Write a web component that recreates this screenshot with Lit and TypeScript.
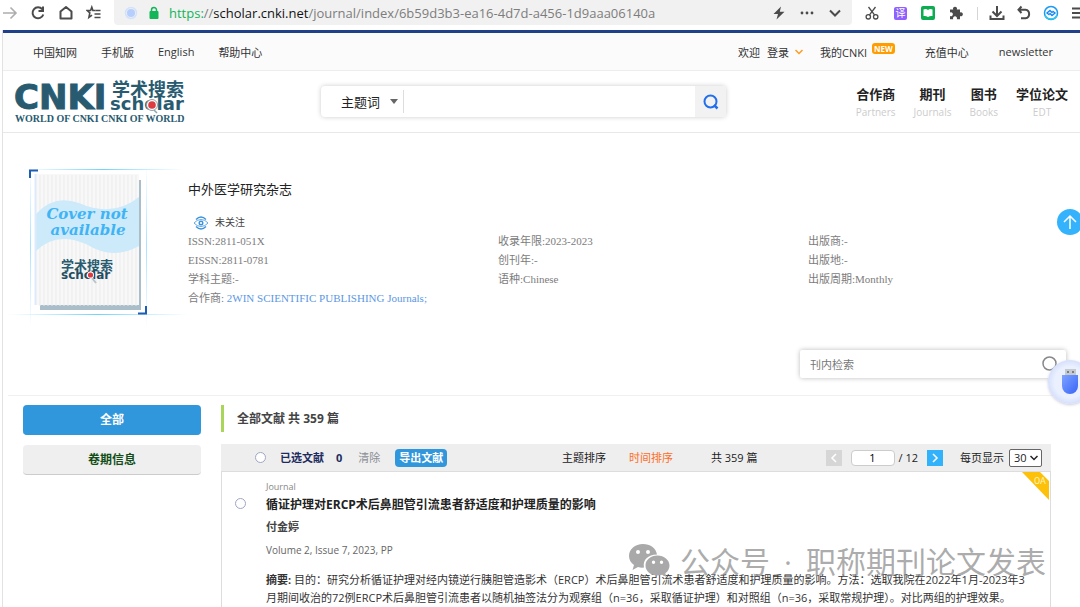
import { LitElement, html, css, svg } from "lit";
import { customElement, property } from "lit/decorators.js";

const sans = css`"Open Sans", "Noto Sans CJK SC", sans-serif`;
const serif = css`"Liberation Serif", "Noto Sans CJK SC", serif`;

@customElement("browser-bar")
class BrowserBar extends LitElement {
  static styles = css`
    :host { display: flex; align-items: flex-start; height: 30px; background: #fff; color: #4b4b4b; font-family: ${sans}; }
    .group { display: flex; align-items: center; height: 26px; flex: none; }
    .left { gap: 12px; padding: 0 12px 0 2px; }
    .right { width: 216px; padding-left: 12px; overflow: hidden; }
    .tools { display: flex; gap: 12px; flex: none; }
    .menu { display: flex; gap: 11px; flex: none; }
    .divider { width: 1px; height: 13px; background: #d5d5d5; margin: 0 11px 0 13px; flex: none; }
    button { all: unset; display: block; width: 16px; height: 16px; flex: none; cursor: pointer; }
    svg { display: block; width: 16px; height: 16px; fill: none; stroke: currentColor; stroke-width: 2; }
    svg.thin { stroke-width: 1.3; }
    svg.medium { stroke-width: 1.6; }
    svg.flat { stroke: none; }
    .pale { color: #adadad; }
    svg.solid { fill: currentColor; stroke: none; }
    .field { flex: 1; min-width: 0; height: 25px; display: flex; align-items: center; background: #f1f1f1; border-radius: 0 0 4px 4px; padding: 0 9px; }
    .field .dot { margin-right: 7px; }
    .url { flex: 1; min-width: 0; white-space: nowrap; overflow: hidden; font-size: 13px; line-height: 20px; color: #7d7d7d; margin-left: 7px; }
    .secure { color: #12b558; }
    .host { color: #111; }
    .end { display: flex; gap: 12px; }
    .tile { background: #8f5fff; border-radius: 2px; color: #fff; font-size: 10px; line-height: 13px; width: 13px; height: 13px; margin: 1px 2px; text-align: center; }
  `;
  render() {
    return html`
      <div class="group left">
        <button class="pale" aria-label="Forward"><svg class="medium" viewBox="0 0 16 16"><path d="M1 8H14M8.500 2.500L14 8L8.500 13.500" /></svg></button>
        <button aria-label="Reload"><svg viewBox="0 0 16 16"><path d="M12.300 4.300A5.500 5.500 0 1 0 13.300 9.500" /><path d="M13 1.500V6H8.500" /></svg></button>
        <button aria-label="Home"><svg viewBox="0 0 16 16"><path d="M2.500 6.500L8 2L13.500 6.500V13.500H2.500Z" stroke-linejoin="round" /></svg></button>
        <button aria-label="Favourites"><svg class="medium" viewBox="0 0 16 16"><path d="M9.500 5.500H6.900L5.800 2.200L4.600 5.500H1.200L3.800 7.800L2.900 12.500L6 10.200" /><path d="M9.500 5.500H14.500M8.500 9H14.500M8.500 12.500H14.500" /></svg></button>
      </div>
      <div class="field">
        <svg class="dot" viewBox="0 0 16 16"><circle cx="8" cy="8" r="4" fill="#b5cefb" stroke="none" /><circle cx="8" cy="8" r="5.500" stroke="#d3e1fa" stroke-width="1.500" /></svg>
        <svg class="lock" viewBox="0 0 16 16"><rect x="3.500" y="6" width="9" height="8" rx="1" fill="#12b558" stroke="none" /><path d="M5.500 7V5A2.500 2.500 0 0 1 10.500 5V7" stroke="#12b558" stroke-width="1.500" /></svg>
        <div class="url"><span class="secure">https:</span>//<span class="host">scholar.cnki.net</span>/journal/index/6b59d3b3-ea16-4d7d-a456-1d9aaa06140a</div>
        <div class="end">
          <button aria-label="Boost"><svg class="solid" viewBox="0 0 16 16"><path d="M10 1.500L2.500 9H7L5.500 14.500L13.500 6.700H8.800Z" /></svg></button>
          <button aria-label="More"><svg class="solid" viewBox="0 0 16 16"><circle cx="3" cy="8" r="1.400" /><circle cx="8" cy="8" r="1.400" /><circle cx="13" cy="8" r="1.400" /></svg></button>
          <button aria-label="Expand"><svg viewBox="0 0 16 16"><path d="M3 5.500L8 10.500L13 5.500" /></svg></button>
        </div>
      </div>
      <div class="group right">
        <div class="tools">
          <button aria-label="Cut"><svg class="thin" viewBox="0 0 16 16"><circle cx="4.300" cy="11.800" r="2.200" /><circle cx="11.700" cy="11.800" r="2.200" /><path d="M5.500 9.900L11.500 2M10.500 9.900L4.500 2" /></svg></button>
          <button aria-label="Translate"><div class="tile">译</div></button>
          <button aria-label="Reader"><svg class="flat" viewBox="0 0 16 16"><rect x="1" y="1" width="14" height="14" rx="2" fill="#0bad50" /><path d="M3.500 4.500Q6 3.500 8 5Q10 3.500 12.500 4.500V11Q10 10.500 8 12Q6 10.500 3.500 11Z" fill="#fff" /></svg></button>
          <button aria-label="Extensions"><svg class="solid" viewBox="0 0 16 16"><path d="M2 4.500H5.200A2 2 0 1 1 8.800 4.500H12V7.400A2 2 0 1 1 12 11V14.200H8.800A2 2 0 1 0 5.200 14.200H2V11A2 2 0 1 0 2 7.400Z" /></svg></button>
        </div>
        <div class="divider"></div>
        <div class="menu">
          <button aria-label="Downloads"><svg viewBox="0 0 16 16"><path d="M8 1V10.500M3.500 6.500L8 11L12.500 6.500M1.500 10.500V14H14.500V10.500" /></svg></button>
          <button aria-label="Undo"><svg viewBox="0 0 16 16"><path d="M5.500 1.500L2.500 4.700L5.500 8M2.500 4.700H9.500A4.300 4.300 0 0 1 9.500 13.200H5" /></svg></button>
          <button aria-label="Assistant"><svg viewBox="0 0 16 16"><circle cx="8" cy="8" r="6.500" stroke="#1b9af4" stroke-width="1.500" /><path d="M2 10A6.500 6.500 0 0 0 14 10" stroke="#31c9e9" stroke-width="1.500" /><path d="M6.500 10L4 8L7 5.500L9.500 8M9.500 6L12 8L9 10.500L6.500 8" stroke="#1686f5" stroke-width="1.400" /></svg></button>
          <button aria-label="Menu"><svg viewBox="0 0 16 16"><path d="M2 3.500H15M2 8H15M2 12.500H15" /></svg></button>
        </div>
      </div>`;
  }
}

@customElement("top-nav")
class TopNav extends LitElement {
  static styles = css`
    :host { display: block; border-top: 3px solid #21408a; background: #fbfbfb; border-bottom: 1px solid #ededed; font-family: ${sans}; }
    nav { display: flex; align-items: center; height: 37px; padding: 0 27px 0 30px; gap: 24px; font-size: 11px; white-space: nowrap; color: #333; }
    a { color: #333; text-decoration: none; display: flex; align-items: center; }
    .welcome { display: flex; gap: 7px; margin-left: auto; }
    .mine { margin-left: -7px; }
    .arrow { width: 8px; height: 6px; margin-left: 6px; fill: none; stroke: #ff9a1f; stroke-width: 1.500; }
    .new { background: #ff9c00; color: #fff; border-radius: 3px; font-size: 8px; line-height: 11px; font-weight: 700; padding: 0 2px; margin: 0 6px 7px 5px; }
    .last { margin-left: 6px; }
  `;
  render() {
    return html`<nav>
      <a href="#">中国知网</a><a href="#">手机版</a><a href="#">English</a><a href="#">帮助中心</a>
      <span class="welcome"><span>欢迎</span><a href="#">登录<svg class="arrow" viewBox="0 0 8 6"><path d="M.5 1L4 4.500L7.500 1" /></svg></a></span>
      <a class="mine" href="#">我的CNKI<span class="new">NEW</span></a>
      <a href="#">充值中心</a><a class="last" href="#">newsletter</a>
    </nav>`;
  }
}

@customElement("site-header")
class SiteHeader extends LitElement {
  static styles = css`
    :host { display: block; border-bottom: 1px solid #e8e8e8; font-family: ${sans}; }
    .row { display: flex; align-items: center; height: 61px; padding: 0 12px; }
    .logo { flex: none; width: 172px; height: 46px; display: block; overflow: visible; }
    .big { font: 700 34px "DejaVu Sans", sans-serif; stroke: #285b70; stroke-width: 1; }
    .cn { font: 700 18px "Noto Sans CJK SC", sans-serif; }
    .word { font: 700 18px "DejaVu Sans", sans-serif; }
    .motto { font: 700 10px "Liberation Serif", serif; }
    form { flex: 0 1 405px; display: flex; height: 31px; margin: 0 24px 0 134px; border-radius: 4px; background: #fff; box-shadow: 0 0 5px #ccc; overflow: hidden; }
    select { appearance: none; border: 0; background: #fff; color: #222; font: 13px/20px ${sans}; width: 60px; margin-left: 20px; padding: 0; }
    .pick { display: flex; align-items: center; }
    .caret { width: 8px; height: 5px; margin: 0 5px 0 -11px; fill: #666; pointer-events: none; }
    input { flex: 1; min-width: 0; border: 0; border-left: 1px solid #ddd; margin: 4px 0; outline: 0; font: 13px ${sans}; }
    button { border: 0; background: #f2f2f2; width: 31px; padding: 0; display: grid; place-items: center; }
    button svg { width: 16px; height: 16px; fill: none; stroke: #216fec; stroke-width: 2; }
    nav { display: flex; gap: 18px; margin-left: auto; }
    nav a { text-align: center; text-decoration: none; color: #222; font-size: 13px; line-height: 20px; font-weight: 700; white-space: nowrap; }
    nav small { display: block; color: #ccc; font-size: 10px; line-height: 16px; font-weight: 400; }
  `;
  render() {
    const links = [["合作商", "Partners"], ["期刊", "Journals"], ["图书", "Books"], ["学位论文", "EDT"]];
    return html`<div class="row">
      <svg class="logo" viewBox="0 0 172 46" fill="#285b70" role="img" aria-label="CNKI Scholar">
        <text class="big" x="-1" y="30">CNKI</text>
        <text class="cn" x="97" y="17">学术搜索</text>
        <text class="word" x="95" y="31">scholar</text>
        <circle cx="137" cy="26" r="5.500" fill="#fff" stroke="#8ba5af" /><circle cx="137" cy="26" r="3.800" fill="#dd3b42" />
        <path d="M139 31L142 34" stroke="#8ba5af" stroke-width="1.500" />
        <text class="motto" x="0" y="43">WORLD OF CNKI CNKI OF WORLD</text>
      </svg>
      <form>
        <span class="pick"><select aria-label="检索字段"><option>主题词</option></select><svg class="caret" viewBox="0 0 8 5"><path d="M0 0H8L4 5Z" /></svg></span>
        <input type="text" aria-label="检索词" />
        <button type="button" aria-label="检索"><svg viewBox="0 0 16 16"><circle cx="7.500" cy="7.500" r="6" /><path d="M11 11L14.500 14.500" stroke-width="2.500" /></svg></button>
      </form>
      <nav>${links.map(([cn, en]) => html`<a href="#">${cn}<small>${en}</small></a>`)}</nav>
    </div>`;
  }
}

@customElement("journal-cover")
class JournalCover extends LitElement {
  static styles = css`
    :host { display: block; }
    svg { display: block; width: 180px; height: 164px; }
    .none { font: italic 700 15px "DejaVu Serif", serif; fill: #3fb4f5; }
    .cn { font: 700 13px "Noto Sans CJK SC", sans-serif; fill: #285b70; }
    .word { font: 700 12px "DejaVu Sans", sans-serif; fill: #244c5e; }
  `;
  render() {
    const stripes = Array.from({ length: 25 }, (_, i) => svg`<path d=${`M${32 + i * 4} 11V142`} stroke="#ebebeb" />`);
    return html`<svg viewBox="0 0 180 164" role="img" aria-label="Cover not available">
      <defs>
        <linearGradient id="h"><stop offset="0" stop-color="#8adcff" stop-opacity="0" /><stop offset=".5" stop-color="#70d4fa" /><stop offset="1" stop-color="#8adcff" stop-opacity="0" /></linearGradient>
        <linearGradient id="v" x2="0" y2="1"><stop offset="0" stop-color="#a8e2ff" stop-opacity="0" /><stop offset=".5" stop-color="#a8e2ff" /><stop offset="1" stop-color="#a8e2ff" stop-opacity="0" /></linearGradient>
      </defs>
      <rect x="14" y="5" width="162" height="1" fill="url(#h)" /><rect x="0" y="150" width="180" height="1" fill="url(#h)" />
      <rect x="22" y="0" width="1" height="164" fill="url(#v)" /><rect x="138" y="0" width="1" height="164" fill="url(#v)" />
      <rect x="32" y="16" width="101" height="130" fill="#a9bec9" />
      <rect x="28" y="10" width="103" height="131" fill="#f8f8f8" />
      ${stripes}
      <path d="M28 50Q46 30 71 39Q105 54 131 33V82Q105 97 78 80Q48 67 28 87Z" fill="#cdeafb" />
      <path d="M27.500 10V141" stroke="#dcebfb" stroke-width="2" />
      <path d="M22 14V6.500H30" fill="none" stroke="#1d5eb5" stroke-width="2" /><path d="M130 149.500H138V142" fill="none" stroke="#1d5eb5" stroke-width="2" />
      <text class="none" x="79" y="55" text-anchor="middle">Cover not</text>
      <text class="none" x="80" y="71" text-anchor="middle">available</text>
      <text class="cn" x="53" y="106">学术搜索</text>
      <text class="word" x="53" y="115">scholar</text>
      <path d="M84 114L88 119" stroke="#b9c5ca" stroke-width="2" /><circle cx="82.500" cy="111" r="3.500" fill="#fff" /><circle cx="82.500" cy="111" r="2.600" fill="#de3b40" />
    </svg>`;
  }
}

@customElement("journal-hero")
class JournalHero extends LitElement {
  static styles = css`
    :host { display: block; margin-left: 5px; padding-bottom: 17px; border-bottom: 1px solid #f0f0f0; font-family: ${serif}; }
    .top { display: flex; padding-top: 31px; }
    .info { flex: 1; padding-top: 16px; }
    h1 { margin: 0 0 13px; font-size: 13px; line-height: 20px; font-weight: 400; color: #222; }
    .follow { all: unset; display: flex; align-items: center; gap: 6px; font-size: 10px; line-height: 19px; color: #444; margin-left: 5px; cursor: pointer; }
    .follow svg { width: 16px; height: 16px; fill: none; stroke: #3d93dc; stroke-width: 1.400; }
    .facts { display: grid; grid-template-columns: repeat(2, 310px) 1fr; font-size: 11px; line-height: 19px; color: #7c7c7c; white-space: nowrap; }
    a { color: #5b97e3; text-decoration: none; }
    .find { display: flex; align-items: center; width: 266px; height: 28px; margin: 22px 14px 0 auto; box-shadow: 0 0 5px #bbb; border-radius: 2px; background: #fff; }
    input { flex: 1; min-width: 0; border: 0; outline: 0; padding: 0 10px; background: none; font: 11px ${sans}; }
    input::placeholder { color: #777; }
    .find button { border: 0; background: none; padding: 0; margin-right: 8px; }
    .find svg { display: block; width: 16px; height: 16px; fill: none; stroke: #888; stroke-width: 1.500; }
  `;
  render() {
    return html`
      <div class="top">
        <journal-cover></journal-cover>
        <div class="info">
          <h1>中外医学研究杂志</h1>
          <button class="follow"><svg viewBox="0 0 16 16"><path d="M3 4.500Q8 -.5 13 4.500M3 11.500Q8 16.500 13 11.500" /><path d="M1 8Q4 4.500 8 4.500T15 8M1 8Q4 11.500 8 11.500T15 8" stroke-width=".8" /><circle cx="8" cy="8" r="1.800" /></svg>未关注</button>
          <div class="facts">
            <span>ISSN:2811-051X</span><span>收录年限:2023-2023</span><span>出版商:-</span>
            <span>EISSN:2811-0781</span><span>创刊年:-</span><span>出版地:-</span>
            <span>学科主题:-</span><span>语种:Chinese</span><span>出版周期:Monthly</span>
            <span>合作商: <a href="#">2WIN SCIENTIFIC PUBLISHING Journals;</a></span>
          </div>
        </div>
      </div>
      <form class="find">
        <input type="text" placeholder="刊内检索" aria-label="刊内检索" />
        <button type="button" aria-label="检索"><svg viewBox="0 0 16 16"><circle cx="7.500" cy="7.500" r="6.500" /><path d="M12 12L15.500 15.500" /></svg></button>
      </form>`;
  }
}

@customElement("result-toolbar")
class ResultToolbar extends LitElement {
  @property({ type: Number }) total = 359;
  static styles = css`
    :host { display: flex; align-items: center; height: 27px; background: #eee; border-bottom: 1px solid #ddd; font: 11px/18px ${sans}; color: #222; white-space: nowrap; padding: 0 9px 0 34px; }
    .all { appearance: none; width: 11px; height: 11px; border: 1px solid #9fa6c2; border-radius: 50%; background: #fff; margin: 0 14px 0 0; }
    label, .count { color: #1d2b5f; font-weight: 700; }
    .count { margin: 0 16px 0 12px; }
    button { font: inherit; border: 0; padding: 0; background: none; color: inherit; cursor: pointer; }
    .clear { color: #8a8f96; margin-right: 15px; }
    .export { background: #3197dc; color: #fff; font-weight: 700; border-radius: 4px; padding: 0 4px; }
    .sort { margin-left: auto; }
    .active { color: #ff6d1f; margin: 0 38px 0 23px; }
    .step { width: 16px; height: 16px; background: #d6d6d6; flex: none; display: grid; place-items: center; }
    .step svg { width: 10px; height: 10px; fill: none; stroke: #fff; stroke-width: 1.500; }
    .prev { margin: 0 9px 0 68px; }
    .next { background: #31b2fb; margin: 0 17px 0 9px; }
    input[type="text"] { width: 44px; height: 16px; box-sizing: border-box; border: 1px solid #ccc; border-radius: 4px; padding: 0; text-align: center; font: inherit; margin-right: 4px; }
    .size { font-weight: 400; color: #222; margin-right: 5px; }
    .per { position: relative; display: flex; align-items: center; }
    select { appearance: none; box-sizing: border-box; width: 33px; height: 18px; border: 1px solid #666; border-radius: 2px; background: #fff; font: inherit; line-height: 16px; padding: 0 0 0 4px; color: #222; }
    .mark { position: absolute; right: 4px; width: 8px; height: 6px; fill: none; stroke: #222; stroke-width: 1.500; pointer-events: none; }
  `;
  render() {
    return html`
      <input class="all" id="all" type="checkbox" /><label for="all">已选文献</label><span class="count">0</span>
      <button class="clear">清除</button><button class="export">导出文献</button>
      <button class="sort">主题排序</button><button class="active">时间排序</button>
      <span>共 ${this.total} 篇</span>
      <button class="step prev" aria-label="上一页"><svg viewBox="0 0 10 10"><path d="M7 1L3 5L7 9" /></svg></button>
      <input type="text" value="1" aria-label="页码" /><span>/ 12</span>
      <button class="step next" aria-label="下一页"><svg viewBox="0 0 10 10"><path d="M3 1L7 5L3 9" /></svg></button>
      <label class="size" for="size">每页显示</label>
      <span class="per"><select id="size"><option>30</option></select><svg class="mark" viewBox="0 0 8 6"><path d="M.5 1L4 4.500L7.500 1" /></svg></span>`;
  }
}

@customElement("result-item")
class ResultItem extends LitElement {
  static styles = css`
    :host { display: block; position: relative; border: 1px solid #ddd; border-width: 0 1px; padding: 6px 20px 6px 13px; font-family: ${sans}; color: #333; }
    .row { display: flex; }
    .tick { appearance: none; flex: none; width: 11px; height: 11px; margin: 20px 20px 0 0; border: 1px solid #9fa6c2; border-radius: 50%; }
    .kind { font-size: 9px; line-height: 18px; color: #888; }
    h2 { margin: 0; font-size: 12px; line-height: 18px; color: #222; }
    h2 a { color: inherit; text-decoration: none; }
    .author { font-size: 11px; line-height: 26px; font-weight: 700; color: #444; }
    .issue { font-size: 10px; line-height: 20px; color: #666; }
    p { margin: 11px 0 0; font-size: 11px; line-height: 18px; white-space: nowrap; }
    .oa { position: absolute; top: 0; right: 1px; width: 27px; height: 28px; }
    .oa text { font: 9px "Roboto", sans-serif; fill: #fff3bd; }
    .stamp { position: absolute; right: 4px; top: 71px; display: flex; align-items: center; gap: 14px; color: rgba(140, 140, 140, .72); font-size: 30px; line-height: 38px; white-space: nowrap; pointer-events: none; }
    .stamp svg { width: 42px; height: 34px; margin: 0 -4px 4px 0; }
  `;
  render() {
    return html`
      <div class="row">
        <input class="tick" type="checkbox" aria-label="选择文献" />
        <div>
          <div class="kind">Journal</div>
          <h2><a href="#">循证护理对ERCP术后鼻胆管引流患者舒适度和护理质量的影响</a></h2>
          <div class="author">付金婷</div>
          <div class="issue">Volume 2, Issue 7, 2023, PP</div>
          <p><b>摘要:</b> 目的：研究分析循证护理对经内镜逆行胰胆管造影术（ERCP）术后鼻胆管引流术患者舒适度和护理质量的影响。方法：选取我院在2022年1月-2023年3<br />月期间收治的72例ERCP术后鼻胆管引流患者以随机抽签法分为观察组（n=36，采取循证护理）和对照组（n=36，采取常规护理）。对比两组的护理效果。</p>
        </div>
      </div>
      <svg class="oa" viewBox="0 0 27 28"><path d="M0 0H18L27 9V28Z" fill="#fdc10a" /><text x="12" y="12">OA</text></svg>
      <div class="stamp"><svg viewBox="0 0 42 34">
        <path fill="#a9a9a9" fill-rule="evenodd" d="M15 1C7 1 1 6 1 13C1 17 3 20 6 22L4.500 27L10 24Q13 25 16 24.500C14.500 17 20 11.500 29 11.500C28 5 22 1 15 1ZM10 7A2 2 0 1 1 10 11A2 2 0 1 1 10 7M20 7A2 2 0 1 1 20 11A2 2 0 1 1 20 7" />
        <path fill="#a9a9a9" fill-rule="evenodd" d="M29.500 12.500C22.500 12.500 17.500 17 17.500 22.500C17.500 28.500 23 32.500 29.500 32.500Q32 32.500 34 31.800L38.500 34L37.300 30.200C40 28.500 41.500 25.500 41.500 22.500C41.500 17 36 12.500 29.500 12.500M25.500 17.500A1.700 1.700 0 1 1 25.500 20.900A1.700 1.700 0 1 1 25.500 17.500M33.500 17.500A1.700 1.700 0 1 1 33.500 20.900A1.700 1.700 0 1 1 33.500 17.500" />
      </svg><span>公众号</span><span>·</span><span>职称期刊论文发表</span></div>`;
  }
}

@customElement("app-root")
class AppRoot extends LitElement {
  static styles = css`
    :host { display: block; min-height: 100vh; background: #fff; overflow: hidden; font-family: ${sans}; }
    .page { margin-left: 2px; border-left: 1px solid #e2e2e2; }
    .content { display: flex; align-items: flex-start; padding: 9px 29px 0 20px; gap: 20px; }
    aside { flex: none; width: 178px; display: grid; gap: 10px; }
    aside button { box-sizing: border-box; height: 30px; border: 0; border-radius: 4px; font: 700 12px/18px ${sans}; background: #efefef; color: #134d18; border-bottom: 1px solid #ccc; cursor: pointer; }
    aside .on { background: #3197dc; color: #fff; border-color: #3197dc; }
    main { flex: 1; min-width: 0; }
    h3 { margin: 0 0 12px; border-left: 3px solid #a9d65a; padding-left: 13px; font-size: 12px; line-height: 27px; color: #444; }
    .float { position: fixed; border: 0; border-radius: 50%; padding: 0; display: grid; place-items: center; }
    .up { top: 209px; right: -3px; width: 26px; height: 26px; background: #34b3fc; }
    .up svg { width: 16px; height: 16px; fill: none; stroke: #fff; stroke-width: 1.500; }
    .usb { top: 360px; right: -12px; width: 44px; height: 44px; background: radial-gradient(#eaf0fe 50%, #b9c8f8); box-shadow: 0 1px 3px #ccd; }
    .usb svg { width: 18px; height: 28px; }
  `;
  render() {
    return html`
      <browser-bar></browser-bar>
      <div class="page">
        <top-nav></top-nav>
        <site-header></site-header>
        <journal-hero></journal-hero>
        <div class="content">
          <aside><button class="on">全部</button><button>卷期信息</button></aside>
          <main>
            <h3>全部文献 共 359 篇</h3>
            <result-toolbar .total=${359}></result-toolbar>
            <result-item></result-item>
          </main>
        </div>
      </div>
      <button class="float up" aria-label="返回顶部"><svg viewBox="0 0 16 16"><path d="M8 15V2M2 8L8 2L14 8" /></svg></button>
      <button class="float usb" aria-label="U盘"><svg viewBox="0 0 18 28">
        <defs><linearGradient id="b" x2="1" y2="1"><stop offset="0" stop-color="#7ea3ff" /><stop offset="1" stop-color="#3864f8" /></linearGradient></defs>
        <rect x="4" y="1" width="11" height="7" fill="#c5c9d0" /><path d="M6 4H8M11 4H13" stroke="#666" stroke-width="1.500" /><path d="M1 7H17V18A8 8 0 0 1 1 18Z" fill="url(#b)" />
      </svg></button>`;
  }
}
